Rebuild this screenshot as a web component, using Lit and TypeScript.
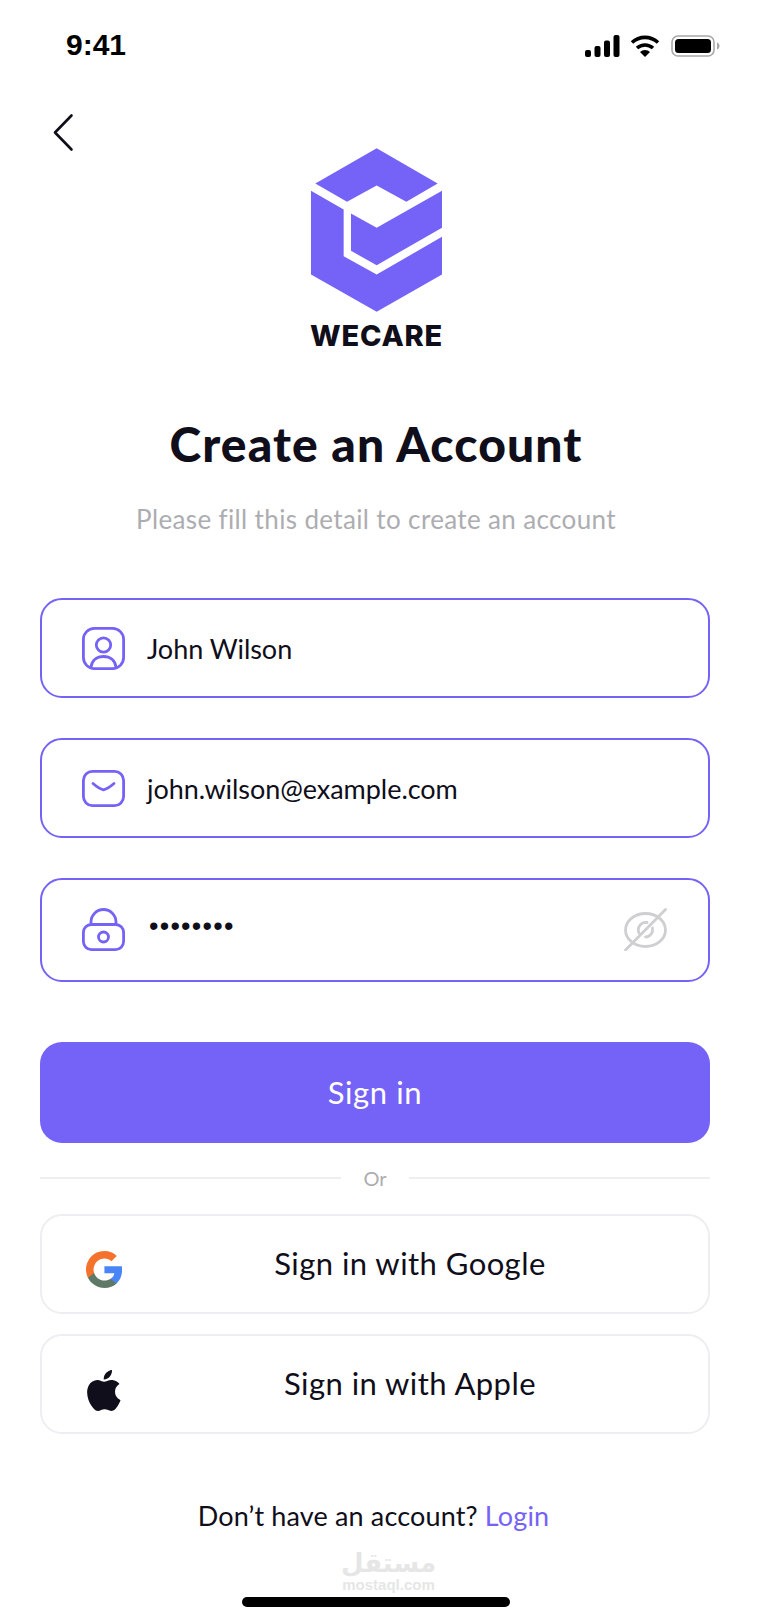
import { LitElement, html, css, svg } from "lit";
import { customElement } from "lit/decorators.js";

const userIcon = svg`<svg class="ficon" viewBox="0 0 43 43" fill="none" stroke="#7563f7" stroke-width="2.8"><rect x="1.400" y="1.400" width="40.200" height="40.200" rx="11"/><circle cx="21.500" cy="18" r="7.200"/><path d="M9 40c1-7 6-10.500 12.500-10.500S33 33 34 40"/></svg>`;
const mailIcon = svg`<svg class="ficon mail" viewBox="0 0 43 37" fill="none" stroke="#7563f7" stroke-width="2.8" stroke-linecap="round"><rect x="1.400" y="1.400" width="40.200" height="34.200" rx="9"/><path d="M11 13.500c3 2.600 7 5.500 10.500 6.300 3.500-.8 7.500-3.700 10.500-6.300"/></svg>`;
const lockIcon = svg`<svg class="ficon lock" viewBox="0 0 43 43" fill="none" stroke="#7563f7" stroke-width="2.8"><rect x="1.400" y="16.500" width="40.200" height="25.100" rx="8"/><path d="M9 16.500V14a12.500 12.500 0 0 1 25 0v2.500"/><circle cx="21.500" cy="29" r="5"/></svg>`;
const eyeIcon = svg`<svg class="eye" viewBox="0 0 43 43" fill="none" stroke="#cfcfd2" stroke-width="2.800" stroke-linecap="round"><ellipse cx="21.500" cy="22" rx="20" ry="16.500"/><path d="M1.500 42 41.500 1.500"/><path d="M15 25a7.500 7.500 0 0 1 8-10.500"/><path d="M28.500 20a7.500 7.500 0 0 1-7 9"/></svg>`;
const googleIcon = svg`<svg class="gicon" viewBox="2 2 43 44"><path fill="#4a85f8" d="M45.120 24.500c0-1.560-.14-3.060-.4-4.500H24v8.510h11.840c-.51 2.750-2.060 5.080-4.390 6.640v5.520h7.110c4.160-3.830 6.560-9.470 6.560-16.170z"/><path fill="#5e7968" d="M24 46c5.940 0 10.920-1.970 14.560-5.330l-7.110-5.520c-1.970 1.320-4.490 2.100-7.450 2.100-5.730 0-10.580-3.870-12.310-9.070H4.340v5.700C7.960 41.070 15.400 46 24 46z"/><path fill="#f4722b" d="M11.690 28.180C11.250 26.860 11 25.450 11 24s.25-2.860.69-4.180v-5.700H4.340C2.850 17.090 2 20.450 2 24c0 3.550.85 6.910 2.340 9.880l7.350-5.700z"/><path fill="#f4722b" d="M24 10.750c3.230 0 6.130 1.110 8.410 3.290l6.310-6.310C34.910 4.180 29.930 2 24 2 15.400 2 7.960 6.930 4.340 14.120l7.350 5.700c1.730-5.200 6.580-9.070 12.310-9.070z"/></svg>`;
const appleIcon = svg`<svg class="aicon" viewBox="2.200 0 19.800 24"><path fill="#0f0e1a" d="M12.152 6.896c-.948 0-2.415-1.078-3.960-1.040-2.040.027-3.910 1.183-4.961 3.014-2.117 3.675-.546 9.103 1.519 12.090 1.013 1.454 2.208 3.090 3.792 3.039 1.520-.065 2.090-.987 3.935-.987 1.831 0 2.350.987 3.960.948 1.637-.026 2.676-1.480 3.676-2.948 1.156-1.688 1.636-3.325 1.662-3.415-.039-.013-3.182-1.221-3.220-4.857-.026-3.040 2.480-4.494 2.597-4.559-1.429-2.090-3.623-2.324-4.390-2.376-2-.156-3.675 1.090-4.610 1.090zM15.530 3.830c.843-1.012 1.400-2.427 1.245-3.830-1.207.052-2.662.805-3.532 1.818-.78.896-1.454 2.338-1.273 3.714 1.338.104 2.715-.688 3.559-1.701"/></svg>`;

@customElement("app-root")
export class AppRoot extends LitElement {
  static styles = css`
    :host { display: block; width: 777px; height: 1624px; background: #fff; font-family: "Lato", "Liberation Sans", sans-serif; color: #0f0e1a; overflow: hidden; }
    .status { height: 114px; display: flex; justify-content: space-between; align-items: flex-start; padding: 28px 57px 0 66px; box-sizing: border-box; }
    .time { font-family: "Liberation Sans", sans-serif; font-weight: 700; font-size: 30px; line-height: 34px; color: #000; }
    .sicons { display: flex; align-items: center; gap: 10px; padding-top: 7px; }
    .back { height: 34px; padding-left: 53px; }
    .back svg { display: block; width: 20px; height: 37px; overflow: visible; }
    .main { padding-right: 25px; }
    .logo { display: flex; flex-direction: column; align-items: center; }
    .logo svg { display: block; width: 131px; height: 164px; }
    .brand { font-family: "Inter", sans-serif; font-weight: 800; font-size: 29px; line-height: 35px; margin-top: 6px; margin-left: 1px; letter-spacing: .8px; }
    h1 { margin: 63px 0 0; text-align: center; font-size: 48px; line-height: 56px; font-weight: 900; letter-spacing: 1.1px; }
    .sub { margin-top: 29px; text-align: center; font-size: 26px; line-height: 36px; color: #adadb1; letter-spacing: .36px; }
    .form { margin: 61px 42px 0 40px; display: flex; flex-direction: column; }
    .field { box-sizing: border-box; height: 100px; border: 2px solid #7563f7; border-radius: 22px; display: flex; align-items: center; padding: 0 40px 0 40px; font-size: 27px; letter-spacing: -.05px; margin-bottom: 40px; }
    .field.pw { height: 104px; margin-bottom: 60px; }
    .ficon { display: block; width: 43px; height: 43px; margin-right: 22px; flex: none; }
    .ficon.mail { height: 37px; }
    .ficon.lock { margin-top: -2px; }
    .dots { flex: 1; font-family: "Liberation Sans", sans-serif; font-size: 27px; letter-spacing: 1.25px; margin-top: -8px; margin-left: 2px; line-height: 30px; }
    .eye { display: block; width: 43px; height: 43px; margin-top: -2px; margin-right: 1px; }
    .primary { height: 101px; padding-bottom: 2px; box-sizing: border-box; background: #7563f7; color: #fff; border-radius: 22px; display: flex; align-items: center; justify-content: center; font-size: 31px; letter-spacing: .6px; }
    .or { height: 36px; margin-bottom: 18px; display: flex; align-items: center; gap: 22px; font-size: 20px; color: #adadb1; margin-top: 17px; }
    .or i { flex: 1; height: 2px; background: #eeeef2; }
    .social { box-sizing: border-box; height: 100px; border: 2px solid #eeeef2; border-radius: 22px; display: flex; align-items: center; padding-left: 44px; font-size: 31px; letter-spacing: .45px; margin-bottom: 20px; }
    .social .label { flex: 1; text-align: center; padding-right: 11px; margin-top: -2px; }
    .gicon { display: block; width: 36px; height: 37px; flex: none; margin-top: 11px; margin-right: 1px; }
    .aicon { display: block; width: 34px; height: 41px; margin-top: 12px; margin-left: 1px; margin-right: 2px; flex: none; }
    .foot { margin-top: 44px; padding-right: 5px; text-align: center; font-size: 27px; line-height: 36px; letter-spacing: .15px; }
    .foot a { color: #7563f7; }
    .mark { margin-top: 14px; display: flex; flex-direction: column; align-items: center; color: #e6e6e6; font-weight: 700; font-family: "Liberation Sans", sans-serif; }
    .mark .ar { font-family: "DejaVu Sans", sans-serif; font-size: 26px; line-height: 30px; font-weight: 700; }
    .mark .en { font-size: 15px; line-height: 14px; }
    .home { width: 268px; height: 10px; border-radius: 5px; background: #000; margin: 5px 0 0 242px; }
  `;

  render() {
    return html`
      <div class="status">
        <div class="time">9:41</div>
        <div class="sicons">
          <svg width="35" height="22" viewBox="0 0 35 22" fill="#000">
            <rect x="0" y="15" width="6" height="7" rx="2"/><rect x="9.500" y="11" width="6" height="11" rx="2"/><rect x="19" y="5.500" width="6" height="16.500" rx="2"/><rect x="28.500" y="0" width="6" height="22" rx="2"/>
          </svg>
          <svg width="30" height="22" viewBox="0 0 30 22" fill="none" stroke="#000" stroke-width="3.600">
            <path d="M2 7.500a19 19 0 0 1 26 0"/><path d="M7 13a12 12 0 0 1 16 0"/><path d="M15 22l-5-5a7 7 0 0 1 10 0z" fill="#000" stroke="none"/>
          </svg>
          <svg width="49" height="22" viewBox="0 0 49 22" fill="none" style="margin-left:1px">
            <rect x="1" y="1" width="42" height="20" rx="6" stroke="#a8a8a8" stroke-width="1.600"/><rect x="4" y="4" width="36" height="14" rx="3.500" fill="#000"/><path d="M46 7.500c1.800.6 2.500 2 2.500 3.500s-.7 2.900-2.500 3.500z" fill="#a8a8a8"/>
          </svg>
        </div>
      </div>
      <div class="back">
        <svg viewBox="0 0 20 37" fill="none" stroke="#0f0e1a" stroke-width="2.600" stroke-linecap="round" stroke-linejoin="round"><path d="M18.500 1.500 2 18.500l16.500 17"/></svg>
      </div>
      <div class="main">
        <div class="logo">
          <svg viewBox="92 54 393 491" fill="#7563f7">
            <path d="M289 54 472 160 378 215 289 166 200 215 105 160z"/>
            <path d="M92 182 190 238V378L289 433 485 320V433L289 545 92 433z"/>
            <path d="M212 250 289 293 485 182V293L289 405 212 362z"/>
          </svg>
          <div class="brand">WECARE</div>
        </div>
        <h1>Create an Account</h1>
        <div class="sub">Please fill this detail to create an account</div>
        <div class="form">
          <div class="field">${userIcon}<span>John Wilson</span></div>
          <div class="field">${mailIcon}<span>john.wilson@example.com</span></div>
          <div class="field pw">${lockIcon}<span class="dots">••••••••</span>${eyeIcon}</div>
          <div class="primary">Sign in</div>
          <div class="or"><i></i><span>Or</span><i></i></div>
          <div class="social">${googleIcon}<span class="label">Sign in with Google</span></div>
          <div class="social">${appleIcon}<span class="label">Sign in with Apple</span></div>
        </div>
        <div class="foot">Don’t have an account? <a>Login</a></div>
      </div>
      <div class="mark"><span class="ar">مستقل</span><span class="en">mostaql.com</span></div>
      <div class="home"></div>
    `;
  }
}
